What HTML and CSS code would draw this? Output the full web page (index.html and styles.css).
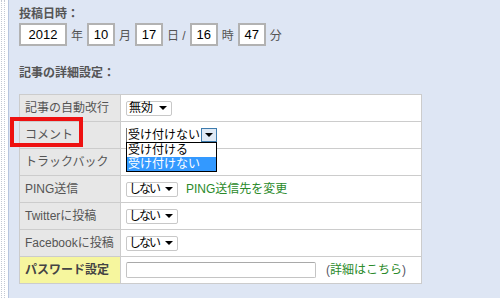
FILE: index.html
```html
<!DOCTYPE html>
<html lang="ja">
<head>
<meta charset="utf-8">
<title>投稿設定</title>
<link rel="stylesheet" href="styles.css">
</head>
<body>
<div class="page">
  <div class="strip"><div class="dots"></div></div>
  <main class="content">
    <h3 class="head">投稿日時：</h3>
    <div class="date-row">
      <input class="dbox year" type="text" value="2012" readonly><span class="unit">年</span>
      <input class="dbox" type="text" value="10" readonly><span class="unit">月</span>
      <input class="dbox" type="text" value="17" readonly><span class="unit">日 /</span>
      <input class="dbox" type="text" value="16" readonly><span class="unit">時</span>
      <input class="dbox" type="text" value="47" readonly><span class="unit">分</span>
    </div>
    <h3 class="head sec">記事の詳細設定：</h3>
    <div class="settings-wrap">
      <table class="settings">
        <tr>
          <td class="label">記事の自動改行</td>
          <td class="value"><span class="sel short"><span class="txt">無効</span><span class="arrow"></span></span></td>
        </tr>
        <tr>
          <td class="label">コメント</td>
          <td class="value">
            <span class="open-sel">
              <span class="open-text">受け付けない</span><span class="open-btn"><span class="arrow"></span></span>
              <span class="options">
                <span class="opt">受け付ける</span>
                <span class="opt chosen">受け付けない</span>
              </span>
            </span>
          </td>
        </tr>
        <tr>
          <td class="label">トラックバック</td>
          <td class="value"></td>
        </tr>
        <tr>
          <td class="label">PING送信</td>
          <td class="value"><span class="sel"><span class="txt kana">しない</span><span class="arrow"></span></span><a class="link ping">PING送信先を変更</a></td>
        </tr>
        <tr>
          <td class="label">Twitterに投稿</td>
          <td class="value"><span class="sel"><span class="txt kana">しない</span><span class="arrow"></span></span></td>
        </tr>
        <tr>
          <td class="label">Facebookに投稿</td>
          <td class="value"><span class="sel"><span class="txt kana">しない</span><span class="arrow"></span></span></td>
        </tr>
        <tr>
          <td class="label pw">パスワード設定</td>
          <td class="value"><input class="pwbox" type="text"><span class="detail">(<a class="link">詳細はこちら</a>)</span></td>
        </tr>
      </table>
      <div class="highlight"></div>
    </div>
  </main>
</div>
</body>
</html>
```
FILE: styles.css
```css
html, body {
  margin: 0;
  padding: 0;
}
body {
  width: 500px;
  height: 298px;
  overflow: hidden;
  background: #dee6f4;
  font-family: "Liberation Sans", "Noto Sans CJK JP", sans-serif;
  font-size: 12px;
  color: #555;
}
.page {
  display: flex;
  height: 298px;
}
.strip {
  width: 8px;
  background: #fff;
  border-right: 1px solid #b7c5de;
  flex: none;
}
.dots {
  margin-left: 1px;
  width: 2px;
  height: 100%;
  border-left: 1px dotted #c3c9d4;
  border-right: 1px dotted #c3c9d4;
}
.content {
  padding: 7px 0 0 10px;
  flex: 1;
}
.head {
  margin: 0;
  font-size: 12px;
  line-height: 15px;
  font-weight: bold;
  color: #555;
}
.head.sec {
  margin-top: 20px;
}
.date-row {
  margin-top: 1px;
  display: flex;
  align-items: center;
  gap: 4px;
  height: 23px;
}
.dbox {
  box-sizing: border-box;
  width: 28px;
  height: 23px;
  border: 2px solid #b2b2b2;
  background: #fff;
  padding: 0;
  font-family: "Liberation Sans", sans-serif;
  font-size: 13px;
  color: #000;
  text-align: center;
  outline: none;
}
.dbox.year {
  width: 48px;
}
.unit {
  font-size: 12px;
  color: #555;
}
.settings-wrap {
  position: relative;
  margin-top: 13px;
  width: 403px;
}
.settings {
  border-collapse: collapse;
  width: 403px;
}
.settings td {
  border: 1px solid #cccccc;
  height: 26px;
  padding: 0 5px;
  line-height: 14px;
  white-space: nowrap;
}
.label {
  width: 90px;
  background: #e7e7e7;
  color: #555;
}
.label.pw {
  background: #f6f69e;
  font-weight: bold;
  color: #444;
}
.value {
  background: #fff;
}
.sel {
  display: inline-flex;
  align-items: center;
  box-sizing: border-box;
  width: 52px;
  height: 15px;
  padding: 0 4px 0 2px;
  border: 1px solid #c8c8c8;
  border-radius: 2px;
  background: #fff;
  color: #000;
  vertical-align: middle;
}
.sel.short {
  width: 46px;
}
.txt.kana {
  letter-spacing: -2px;
}
.arrow {
  display: inline-block;
  width: 0;
  height: 0;
  margin-left: auto;
  border-left: 4px solid transparent;
  border-right: 4px solid transparent;
  border-top: 4px solid #000;
}
.open-sel {
  position: relative;
  display: inline-flex;
  vertical-align: middle;
  height: 14px;
}
.open-text {
  box-sizing: border-box;
  width: 75px;
  height: 14px;
  padding-left: 1px;
  color: #000;
  border-left: 1px solid #777;
  background: #fff;
  line-height: 14px;
}
.open-btn {
  box-sizing: border-box;
  width: 16px;
  height: 14px;
  border: 1px solid #3d7bad;
  background: #dfe9f5;
  display: flex;
  align-items: center;
  justify-content: center;
}
.open-btn .arrow {
  margin-left: 0;
}
.options {
  position: absolute;
  left: 0;
  top: 14px;
  box-sizing: border-box;
  width: 91px;
  border: 1px solid #000;
  background: #fff;
  display: flex;
  flex-direction: column;
  z-index: 2;
}
.opt {
  height: 14px;
  line-height: 14px;
  padding-left: 1px;
  color: #000;
}
.opt.chosen {
  background: #3399ff;
  color: #fff;
}
.link {
  color: #2a8a2a;
  text-decoration: none;
}
.ping {
  margin-left: 8px;
  vertical-align: middle;
}
.pwbox {
  box-sizing: border-box;
  width: 190px;
  height: 16px;
  border: 1px solid #c4c4c4;
  border-top-color: #a9a9a9;
  border-radius: 2px;
  padding: 0;
  vertical-align: middle;
  outline: none;
}
.detail {
  margin-left: 10px;
  color: #556;
  vertical-align: middle;
}
.highlight {
  position: absolute;
  left: -9px;
  top: 23px;
  box-sizing: border-box;
  width: 73px;
  height: 30px;
  border: 4px solid #ee1111;
}
```
